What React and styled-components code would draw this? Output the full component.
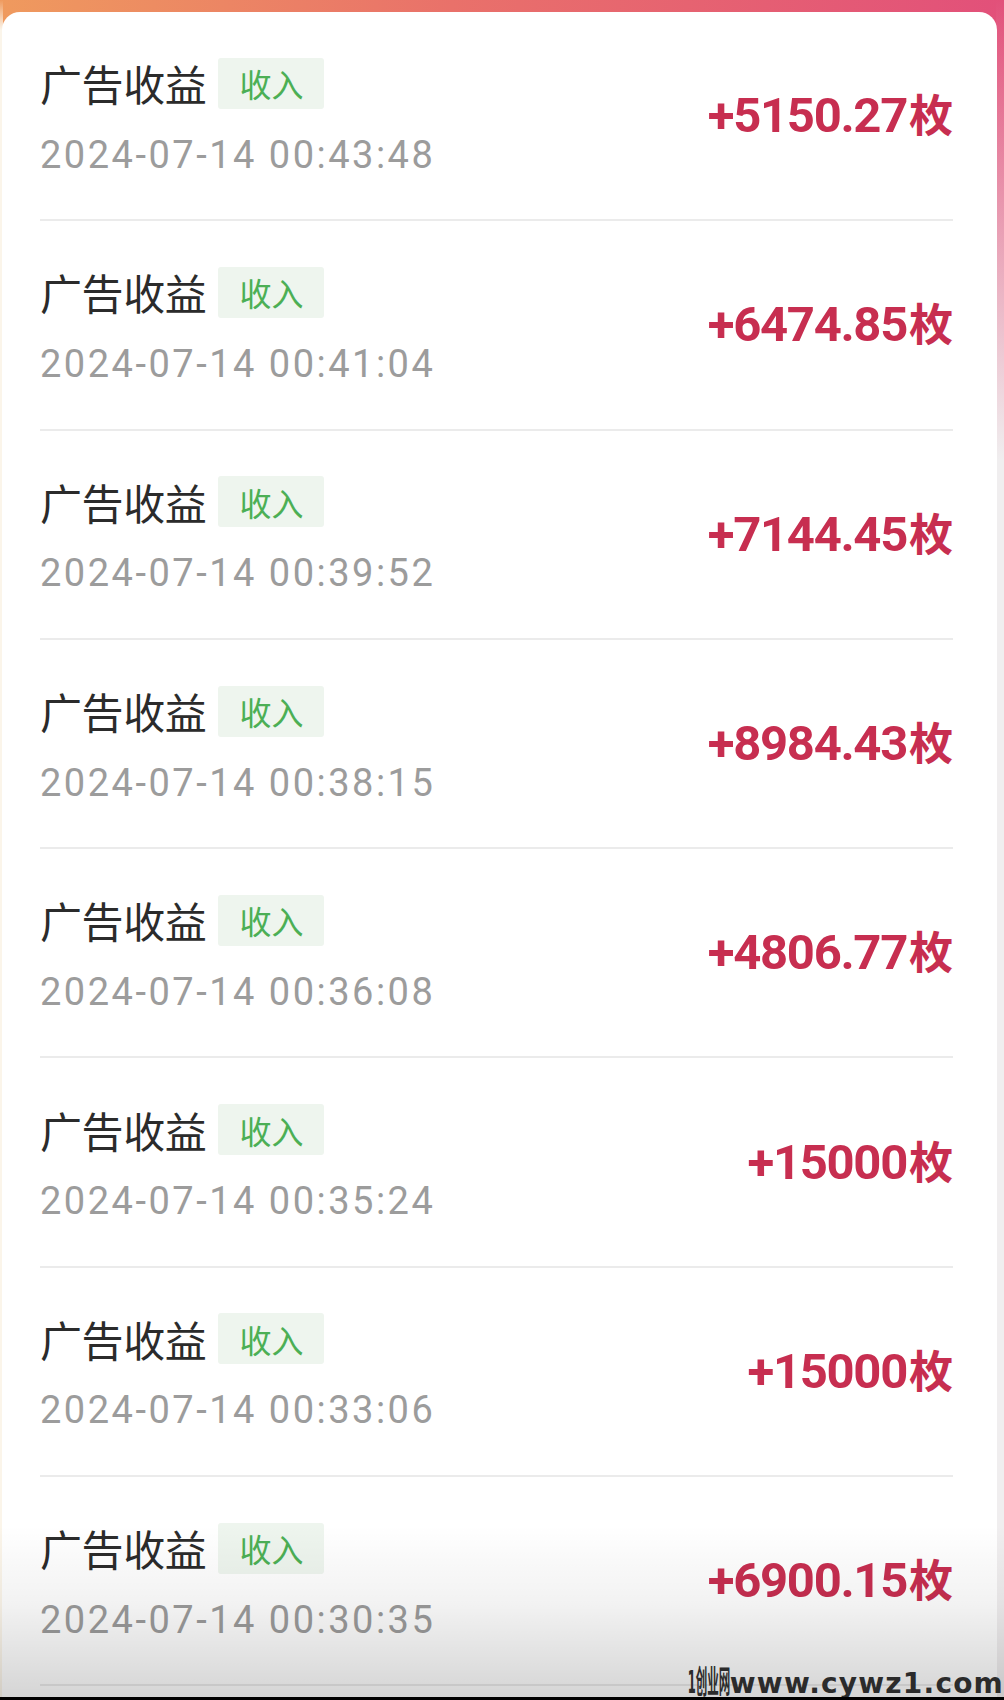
import React from "react";
import styled, { createGlobalStyle } from "styled-components";

const GlobalStyle = createGlobalStyle`
  html, body { margin: 0; padding: 0; }
  body { background: #f1f1f1; }
  * { box-sizing: border-box; }
`;

const Page = styled.div`
  position: relative;
  width: 1004px;
  height: 1700px;
  overflow: hidden;
  display: flex;
  flex-direction: column;
  padding: 12px 7px 0 2px;
  background:
    linear-gradient(to bottom, rgba(241, 241, 241, 0) 0, #f0eeef 460px) right top / 8px 100% no-repeat,
    linear-gradient(to bottom, rgba(252, 246, 236, 0) 0, #fbf5ea 30px) left top / 3px 100% no-repeat,
    linear-gradient(90deg, #ef9a5e 0%, #e9716a 45%, #e2507a 100%);
`;

const Card = styled.div`
  flex: 1;
  background: #ffffff;
  border-radius: 18px 18px 0 0;
  padding: 0 44px 0 38px;
`;

const Row = styled.div`
  height: 209.3px;
  display: flex;
  align-items: center;
  justify-content: space-between;
  border-bottom: 2px solid #ebebeb;
`;

const Left = styled.div`
  display: flex;
  flex-direction: column;
`;

const TitleLine = styled.div`
  display: flex;
  align-items: center;
  height: 51px;
`;

const Title = styled.span`
  font-family: "Noto Sans CJK SC", "Noto Sans", sans-serif;
  font-size: 42px;
  line-height: 1;
  color: #2b2b2b;
  letter-spacing: -0.4px;
`;

const Badge = styled.span`
  margin-left: 12px;
  height: 51px;
  padding: 0 21px;
  display: inline-flex;
  align-items: center;
  background: #eef5ee;
  border-radius: 3px;
  font-family: "Noto Sans CJK SC", "Noto Sans", sans-serif;
  font-size: 32px;
  line-height: 1;
  color: #4caf55;
`;

const Time = styled.div`
  margin-top: 27px;
  font-family: Roboto, "Noto Sans", sans-serif;
  font-size: 38px;
  line-height: 38px;
  letter-spacing: 2.5px;
  color: #9c9c9c;
`;

const Amount = styled.div`
  font-family: Roboto, "Noto Sans CJK SC", sans-serif;
  font-weight: 700;
  font-size: 49px;
  letter-spacing: -1.3px;
  line-height: 1;
  color: #c72e50;
  white-space: nowrap;
`;

const Unit = styled.span`
  font-family: "Noto Sans CJK SC", sans-serif;
  font-size: 44px;
  font-weight: 700;
  letter-spacing: 0;
  margin-left: 2px;
`;

const Fade = styled.div`
  position: absolute;
  left: 0;
  right: 0;
  bottom: 0;
  height: 175px;
  pointer-events: none;
  background: linear-gradient(
    to bottom,
    rgba(0, 0, 0, 0) 0%,
    rgba(0, 0, 0, 0.05) 45%,
    rgba(0, 0, 0, 0.17) 100%
  );
`;

const Watermark = styled.div`
  position: absolute;
  right: 0;
  bottom: 3px;
  font-family: "DejaVu Sans", "Liberation Sans", sans-serif;
  font-weight: 700;
  font-size: 28px;
  line-height: 26px;
  letter-spacing: 1.2px;
  color: #2b2b2b;
  white-space: nowrap;
`;

const Brand = styled.span`
  display: inline-block;
  font-size: 32px;
  letter-spacing: 0;
  transform: scaleX(0.36);
  transform-origin: right center;
  font-family: "DejaVu Sans", "Noto Sans CJK SC", sans-serif;
`;

const BottomBar = styled.div`
  position: absolute;
  left: 0;
  right: 0;
  bottom: 0;
  height: 3px;
  background: #000;
`;

const records = [
  { time: "2024-07-14 00:43:48", amount: "+5150.27" },
  { time: "2024-07-14 00:41:04", amount: "+6474.85" },
  { time: "2024-07-14 00:39:52", amount: "+7144.45" },
  { time: "2024-07-14 00:38:15", amount: "+8984.43" },
  { time: "2024-07-14 00:36:08", amount: "+4806.77" },
  { time: "2024-07-14 00:35:24", amount: "+15000" },
  { time: "2024-07-14 00:33:06", amount: "+15000" },
  { time: "2024-07-14 00:30:35", amount: "+6900.15" },
];

export default function App() {
  return (
    <>
      <GlobalStyle />
      <Page>
        <Card>
          {records.map((r) => (
            <Row key={r.time}>
              <Left>
                <TitleLine>
                  <Title>广告收益</Title>
                  <Badge>收入</Badge>
                </TitleLine>
                <Time>{r.time}</Time>
              </Left>
              <Amount>
                {r.amount}
                <Unit>枚</Unit>
              </Amount>
            </Row>
          ))}
        </Card>
        <Fade />
        <Watermark>
          <Brand>1创业网</Brand>www.cywz1.com
        </Watermark>
        <BottomBar />
      </Page>
    </>
  );
}
